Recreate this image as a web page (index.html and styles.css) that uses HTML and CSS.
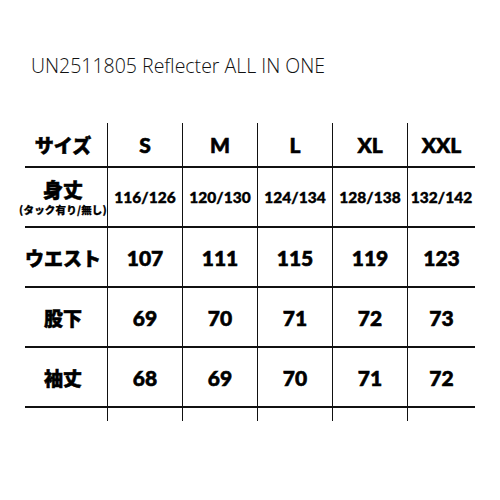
FILE: index.html
```html
<!DOCTYPE html>
<html lang="ja">
<head>
<meta charset="utf-8">
<link rel="stylesheet" href="styles.css">
</head>
<body>
<div class="page">
  <h1 class="title">UN2511805 Reflecter ALL IN ONE</h1>
  <div class="table">
    <div class="row head">
      <div class="cell label">サイズ</div>
      <div class="cell">S</div>
      <div class="cell">M</div>
      <div class="cell">L</div>
      <div class="cell">XL</div>
      <div class="cell">XXL</div>
    </div>
    <div class="row">
      <div class="cell label stack"><span class="main">身丈</span><span class="sub">(タック有り/無し)</span></div>
      <div class="cell small">116/126</div>
      <div class="cell small">120/130</div>
      <div class="cell small">124/134</div>
      <div class="cell small">128/138</div>
      <div class="cell small">132/142</div>
    </div>
    <div class="row">
      <div class="cell label">ウエスト</div>
      <div class="cell">107</div>
      <div class="cell">111</div>
      <div class="cell">115</div>
      <div class="cell">119</div>
      <div class="cell">123</div>
    </div>
    <div class="row">
      <div class="cell label">股下</div>
      <div class="cell">69</div>
      <div class="cell">70</div>
      <div class="cell">71</div>
      <div class="cell">72</div>
      <div class="cell">73</div>
    </div>
    <div class="row">
      <div class="cell label">袖丈</div>
      <div class="cell">68</div>
      <div class="cell">69</div>
      <div class="cell">70</div>
      <div class="cell">71</div>
      <div class="cell">72</div>
    </div>
    <div class="row tail">
      <div class="cell"></div>
      <div class="cell"></div>
      <div class="cell"></div>
      <div class="cell"></div>
      <div class="cell"></div>
      <div class="cell"></div>
    </div>
  </div>
</div>
</body>
</html>
```
FILE: styles.css
```css
* { box-sizing: border-box; }
html, body { margin: 0; padding: 0; background: #fff; }
.page {
  width: 500px;
  height: 500px;
  padding-top: 54px;
  color: #111;
}
.title {
  margin: 0 0 0 31px;
  font-family: "Open Sans", "Noto Sans CJK JP", sans-serif;
  font-weight: 300;
  font-size: 19.5px;
  line-height: 24px;
  height: 69px;
  color: #111;
  white-space: nowrap;
}
.table {
  margin-left: 25px;
  width: 450px;
}
.row {
  display: grid;
  grid-template-columns: 82px 75px 75px 75px 75px 68px;
  height: 60px;
  border-bottom: 2px solid #111;
}
.row.head { height: 45px; }
.row.tail { height: 13px; border-bottom: none; }
.cell {
  display: flex;
  align-items: center;
  justify-content: center;
  border-left: 1px solid #111;
  font-family: "Lato", "Noto Sans CJK JP", sans-serif;
  font-weight: 900;
  font-size: 21px;
  color: #000;
  white-space: nowrap;
  -webkit-text-stroke: 0.6px #000;
}
.cell:first-child { border-left: none; }
.label {
  font-family: "Noto Sans CJK JP", sans-serif;
  font-weight: 900;
  font-size: 19px;
  padding-right: 6px;
  -webkit-text-stroke: 0.5px #000;
}
.small { font-size: 15.5px; -webkit-text-stroke: 0.4px #000; }
.stack {
  flex-direction: column;
  padding-top: 2px;
}
.main { font-size: 20px; line-height: 20px; display: block; }
.sub {
  display: block;
  font-size: 10.5px;
  line-height: 12px;
  margin-top: 4px;
  letter-spacing: 0.2px;
  -webkit-text-stroke: 0.25px #000;
}
```
